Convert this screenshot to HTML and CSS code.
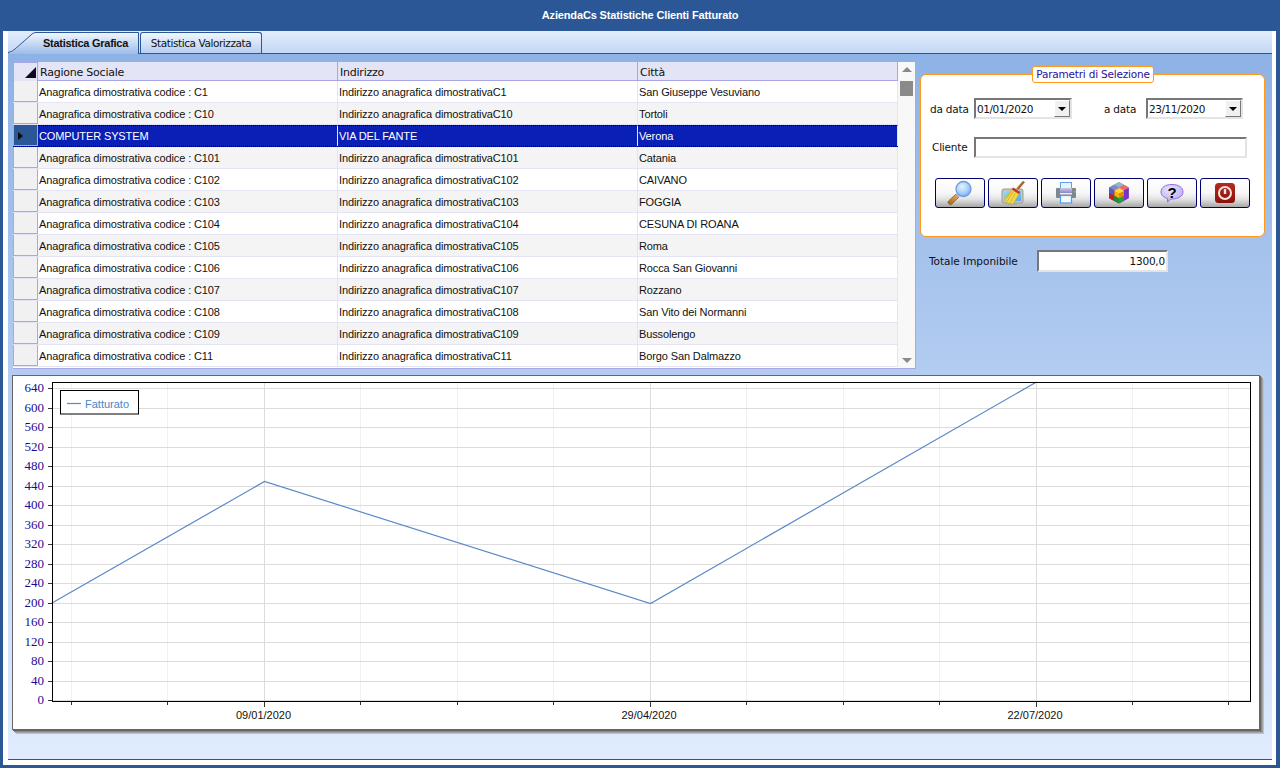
FILE: index.html
```html
<!DOCTYPE html>
<html lang="it">
<head>
<meta charset="utf-8">
<title>AziendaCs Statistiche Clienti Fatturato</title>
<link rel="stylesheet" href="styles.css">
</head>
<body>
<div class="window">
  <header class="titlebar">AziendaCs Statistiche Clienti Fatturato</header>
  <div class="frame">
    <nav class="tabstrip">
      <div class="tab tab-active">
        <svg class="tab-shape" width="131" height="22" viewBox="0 0 131 22"><defs><linearGradient id="tabg" x1="0" y1="0" x2="0" y2="1"><stop offset="0" stop-color="#f2f7fe"/><stop offset="1" stop-color="#9dbcea"/></linearGradient></defs><path d="M0 21.5 Q4 21 7 18 L23 3 Q25 .5 28 .5 L130.5 .5 L130.5 22 L0 22Z" fill="url(#tabg)"/><path d="M0 20.5 Q4 20 7 17 L23 3 Q25 .5 28 .5 L130.5 .5 L130.5 22" fill="none" stroke="#2b5797"/></svg>
        <span class="tab-label">Statistica Grafica</span>
      </div>
      <div class="tab tab-idle">Statistica Valorizzata</div>
    </nav>
    <main class="panel">
      <section class="top">
        <div class="datagrid">
          <div class="table">
            <div class="row head"><div class="rh corner"><span class="corner-mark"></span></div><div class="c">Ragione Sociale</div><div class="c">Indirizzo</div><div class="c">Città</div></div>
            <div class="row"><div class="rh"></div><div class="c">Anagrafica dimostrativa codice : C1</div><div class="c">Indirizzo anagrafica dimostrativaC1</div><div class="c">San Giuseppe Vesuviano</div></div>
            <div class="row"><div class="rh"></div><div class="c">Anagrafica dimostrativa codice : C10</div><div class="c">Indirizzo anagrafica dimostrativaC10</div><div class="c">Tortoli</div></div>
            <div class="row sel"><div class="rh"><span class="arrow"></span></div><div class="c">COMPUTER SYSTEM</div><div class="c">VIA DEL FANTE</div><div class="c">Verona</div></div>
            <div class="row"><div class="rh"></div><div class="c">Anagrafica dimostrativa codice : C101</div><div class="c">Indirizzo anagrafica dimostrativaC101</div><div class="c">Catania</div></div>
            <div class="row"><div class="rh"></div><div class="c">Anagrafica dimostrativa codice : C102</div><div class="c">Indirizzo anagrafica dimostrativaC102</div><div class="c">CAIVANO</div></div>
            <div class="row"><div class="rh"></div><div class="c">Anagrafica dimostrativa codice : C103</div><div class="c">Indirizzo anagrafica dimostrativaC103</div><div class="c">FOGGIA</div></div>
            <div class="row"><div class="rh"></div><div class="c">Anagrafica dimostrativa codice : C104</div><div class="c">Indirizzo anagrafica dimostrativaC104</div><div class="c">CESUNA DI ROANA</div></div>
            <div class="row"><div class="rh"></div><div class="c">Anagrafica dimostrativa codice : C105</div><div class="c">Indirizzo anagrafica dimostrativaC105</div><div class="c">Roma</div></div>
            <div class="row"><div class="rh"></div><div class="c">Anagrafica dimostrativa codice : C106</div><div class="c">Indirizzo anagrafica dimostrativaC106</div><div class="c">Rocca San Giovanni</div></div>
            <div class="row"><div class="rh"></div><div class="c">Anagrafica dimostrativa codice : C107</div><div class="c">Indirizzo anagrafica dimostrativaC107</div><div class="c">Rozzano</div></div>
            <div class="row"><div class="rh"></div><div class="c">Anagrafica dimostrativa codice : C108</div><div class="c">Indirizzo anagrafica dimostrativaC108</div><div class="c">San Vito dei Normanni</div></div>
            <div class="row"><div class="rh"></div><div class="c">Anagrafica dimostrativa codice : C109</div><div class="c">Indirizzo anagrafica dimostrativaC109</div><div class="c">Bussolengo</div></div>
            <div class="row"><div class="rh"></div><div class="c">Anagrafica dimostrativa codice : C11</div><div class="c">Indirizzo anagrafica dimostrativaC11</div><div class="c">Borgo San Dalmazzo</div></div>
          </div>
          <div class="scrollbar">
            <span class="sb-up"></span>
            <span class="sb-thumb"></span>
            <span class="sb-down"></span>
          </div>
        </div>
        <aside class="side">
          <form class="group">
            <div class="legend">Parametri di Selezione</div>
            <div class="field-row">
              <label class="lbl lbl-da">da data</label>
              <div class="input date date-a">01/01/2020<span class="drop"><span class="drop-arrow"></span></span></div>
              <label class="lbl lbl-a">a data</label>
              <div class="input date date-b">23/11/2020<span class="drop"><span class="drop-arrow"></span></span></div>
            </div>
            <div class="field-row row-cliente">
              <label class="lbl lbl-cliente">Cliente</label>
              <div class="input input-cliente"></div>
            </div>
            <div class="buttons">
              <button type="button" class="btn" aria-label="Cerca">
                <svg width="30" height="28" viewBox="0 0 30 28"><defs><radialGradient id="lens" cx=".4" cy=".35" r=".7"><stop offset="0" stop-color="#e6f3ff"/><stop offset=".6" stop-color="#a8d0fb"/><stop offset="1" stop-color="#6ea5ee"/></radialGradient><linearGradient id="hand" x1="1" y1="0" x2="0" y2="1"><stop offset="0" stop-color="#eab35c"/><stop offset="1" stop-color="#a4601c"/></linearGradient></defs><path d="M4.5 25.5 L3 24 Q2.6 23 3.5 22 L11 15 L14 18 L6.5 25.5 Q5.5 26 4.5 25.5Z" fill="url(#hand)" stroke="#8a5a20" stroke-width=".7"/><path d="M11.5 14.5 L14.5 17.5" stroke="#b8b8c8" stroke-width="2.2"/><circle cx="18.5" cy="10" r="7.5" fill="url(#lens)" stroke="#6f9fe0" stroke-width="1.3"/></svg>
              </button>
              <button type="button" class="btn" aria-label="Pulisci">
                <svg width="30" height="28" viewBox="0 0 30 28"><defs><linearGradient id="scr" x1="0" y1="0" x2="1" y2="1"><stop offset="0" stop-color="#9cd6f4"/><stop offset="1" stop-color="#5aa8dc"/></linearGradient></defs><rect x="4" y="10" width="21" height="14" rx="2" fill="#c6c6c2" stroke="#9a9a96"/><rect x="6" y="12" width="17" height="10" fill="url(#scr)"/><path d="M10 24 L10 26 L19 26 L19 24" fill="#a9a9a5"/><path d="M6 21 L14 10.5 L21 14.5 L15 25 Q10 25.5 6 21Z" fill="#f4da4a" stroke="#cfae2c" stroke-width=".6"/><path d="M9 22.5 L15.5 12 M12 24 L17.5 13.5 M7.5 20.5 L13.5 12.5" stroke="#c9a82a" stroke-width=".8"/><path d="M14.5 9.5 L21.5 14" stroke="#c6332b" stroke-width="2.4"/><path d="M19.5 10 L26 2.5" stroke="#a4692c" stroke-width="2.6"/></svg>
              </button>
              <button type="button" class="btn" aria-label="Stampa">
                <svg width="30" height="28" viewBox="0 0 30 28"><defs><linearGradient id="prn" x1="0" y1="0" x2="0" y2="1"><stop offset="0" stop-color="#cbc9ec"/><stop offset="1" stop-color="#8a87bf"/></linearGradient></defs><rect x="9.5" y="3.5" width="11" height="6" fill="#eaf4ff" stroke="#5aa4ee"/><rect x="5" y="9" width="20" height="10" rx="1" fill="#80858f"/><rect x="9" y="9" width="12" height="5" fill="url(#prn)"/><rect x="9" y="14" width="12" height="1.5" fill="#eeeef6"/><rect x="23" y="12" width="1.5" height="1.5" fill="#6fd06f"/><rect x="9.5" y="16.5" width="11" height="7.5" fill="#f4f9ff" stroke="#4f9de9" stroke-width="1.2"/></svg>
              </button>
              <button type="button" class="btn" aria-label="Grafico">
                <svg width="30" height="28" viewBox="0 0 30 28"><g transform="translate(1.5 1.2) scale(.9)"><path d="M15 2 L26 8 L15 14 L4 8Z" fill="#e58378"/><path d="M15 2 L20.5 5 L15 8 L9.5 5Z" fill="#8fb4d8"/><path d="M4 8 L9.5 5 L15 8 L9.5 11Z" fill="#6f90c8"/><path d="M15 8 L20.5 5 L26 8 L20.5 11Z" fill="#e86f62"/><path d="M4 8 L15 14 L15 26 L4 20Z" fill="#c9352b"/><path d="M4 8 L9.5 11 L9.5 17 L4 14Z" fill="#4a5fd0"/><path d="M9.5 17 L15 20 L15 26 L9.5 23Z" fill="#238a3a"/><path d="M4 14 L9.5 17 L9.5 23 L4 20Z" fill="#b5262b"/><path d="M26 8 L15 14 L15 26 L26 20Z" fill="#7a33c8"/><path d="M15 20 L20.5 17 L20.5 23 L15 26Z" fill="#2f9a3f"/><path d="M10 12 L15.5 9 L20.5 12 L20.5 17 L15 20 L10 17Z" fill="#f4b400"/><path d="M15 14.5 L20.5 12 L20.5 17 L15 20Z" fill="#dd8e00"/><path d="M10 12 L15 14.5 L20.5 12 L15.5 9Z" fill="#ffd64a"/></g></svg>
              </button>
              <button type="button" class="btn" aria-label="Aiuto">
                <svg width="30" height="28" viewBox="0 0 30 28"><defs><radialGradient id="bub" cx=".4" cy=".3" r=".8"><stop offset="0" stop-color="#e8e6ff"/><stop offset="1" stop-color="#b0a8f2"/></radialGradient></defs><path d="M15 5.5 C22 5.5 26 8.5 26 13 C26 17.5 21 20 15 20 L14 20 L10.5 23 L10.5 19.5 C6.5 18.5 4 16 4 13 C4 8.5 8 5.5 15 5.5Z" fill="url(#bub)" stroke="#a06ae8" stroke-width="1"/><text x="15" y="18.5" class="qmark" text-anchor="middle">?</text></svg>
              </button>
              <button type="button" class="btn" aria-label="Esci">
                <svg width="30" height="28" viewBox="0 0 30 28"><defs><linearGradient id="pw" x1="0" y1="0" x2="0" y2="1"><stop offset="0" stop-color="#b42a20"/><stop offset="1" stop-color="#8c100d"/></linearGradient></defs><rect x="5" y="4" width="20" height="20" rx="3.5" fill="url(#pw)"/><circle cx="15" cy="14" r="6" fill="none" stroke="#f6e6e2" stroke-width="2"/><path d="M15 10 V15" stroke="#f6e6e2" stroke-width="2.4"/></svg>
              </button>
            </div>
          </form>
          <div class="total">
            <label class="lbl lbl-total">Totale Imponibile</label>
            <div class="input input-total">1300,0</div>
          </div>
        </aside>
      </section>
      <section class="chart">
        <svg class="chart-svg" width="1246" height="353" viewBox="13 376 1246 353">
          <g class="gminor">
            <path d="M71.5 382V702M167.5 382V702M360.5 382V702M457.5 382V702M553.5 382V702M746.5 382V702M843.5 382V702M939.5 382V702M1132.5 382V702M1228.5 382V702"/>
          </g>
          <g class="gmajor">
            <path d="M52 388.5H1251M52 408.5H1251M52 427.5H1251M52 447.5H1251M52 466.5H1251M52 486.5H1251M52 505.5H1251M52 525.5H1251M52 544.5H1251M52 564.5H1251M52 583.5H1251M52 603.5H1251M52 622.5H1251M52 642.5H1251M52 661.5H1251M52 681.5H1251M52 700.5H1251"/>
            <path d="M264.5 382V702M650.5 382V702M1036.5 382V702"/>
          </g>
          <polyline class="series" points="52,603 264.5,481.5 650.5,603.5 1036.5,382"/>
          <g class="ticks">
            <path d="M48 388.5H52M48 408.5H52M48 427.5H52M48 447.5H52M48 466.5H52M48 486.5H52M48 505.5H52M48 525.5H52M48 544.5H52M48 564.5H52M48 583.5H52M48 603.5H52M48 622.5H52M48 642.5H52M48 661.5H52M48 681.5H52M48 700.5H52"/>
            <path d="M71.5 702V705M167.5 702V705M264.5 702V707M360.5 702V705M457.5 702V705M553.5 702V705M650.5 702V707M746.5 702V705M843.5 702V705M939.5 702V705M1036.5 702V707M1132.5 702V705M1228.5 702V705"/>
          </g>
          <rect class="plot" x="52.5" y="382.5" width="1198" height="319"/>
          <rect class="legend-box" x="60.5" y="390.5" width="78" height="23.5"/>
          <path class="series" d="M67 403.5H81"/>
          <text class="legend-text" x="85" y="408">Fatturato</text>
          <g class="ylab">
            <text x="44" y="392">640</text><text x="44" y="412">600</text><text x="44" y="431">560</text><text x="44" y="451">520</text><text x="44" y="470">480</text><text x="44" y="490">440</text><text x="44" y="509">400</text><text x="44" y="529">360</text><text x="44" y="548">320</text><text x="44" y="568">280</text><text x="44" y="587">240</text><text x="44" y="607">200</text><text x="44" y="626">160</text><text x="44" y="646">120</text><text x="44" y="665">80</text><text x="44" y="685">40</text><text x="44" y="704">0</text>
          </g>
          <g class="xlab">
            <text x="263.5" y="719">09/01/2020</text><text x="649" y="719">29/04/2020</text><text x="1035" y="719">22/07/2020</text>
          </g>
        </svg>
      </section>
    </main>
  </div>
</div>
</body>
</html>
```
FILE: styles.css
```css
* { box-sizing: border-box; }
html, body { margin: 0; padding: 0; }
body { width: 1280px; height: 768px; overflow: hidden; font-family: "Liberation Sans", Arial, sans-serif; }
.window { width: 1280px; height: 768px; display: flex; flex-direction: column; background: #2b5797; }
.titlebar { height: 31px; flex: none; display: flex; align-items: center; justify-content: center; color: #fff; font: bold 11px/1 "Liberation Sans", sans-serif; letter-spacing: -.15px; padding-bottom: 1px; }
.frame { flex: 1; margin: 0 4px 3px 3px; padding: 0 4px 5px 5px; background: #fff; display: flex; flex-direction: column; min-height: 0; }
.tabstrip { height: 23px; flex: none; display: flex; align-items: flex-end; padding-top: 2px; background: linear-gradient(#e2eefc, #c3d7f4); border-bottom: 1px solid #2b5797; }
.tab { height: 21px; font: 10.5px/20px "DejaVu Sans", sans-serif; color: #111; }
.tab-active { position: relative; width: 131px; height: 22px; margin-bottom: -1px; font: bold 11px/22px "Liberation Sans", sans-serif; letter-spacing: -.27px; text-align: left; }
.tab-shape { position: absolute; left: 0; top: 0; }
.tab-label { position: relative; display: block; padding-left: 35px; line-height: 22px; }
.tab-idle { width: 122px; height: 21px; margin-left: 1px; text-align: center; letter-spacing: -.42px; border: 1px solid #2b5797; border-bottom: 0; border-radius: 3px 3px 0 0; background: linear-gradient(#f0f6fe, #b7cff1); }
.panel { flex: 1; min-height: 0; display: flex; flex-direction: column; padding: 8px 0 0 4px; background: linear-gradient(#8eb2e6, #e0ecfe); border-bottom: 1px solid #2b5797; }
.top { display: flex; height: 307px; flex: none; margin-left: 1px; }
.datagrid { width: 903px; height: 307px; flex: none; display: flex; background: #fff; border: 1px solid #a9a5e6; border-top: 0; border-left: 0; }
.table { width: 885px; flex: none; overflow: hidden; background: #fff; }
.row { display: grid; grid-template-columns: 25px 300px 300px 260px; height: 22px; font-size: 11px; letter-spacing: -.12px; line-height: 23px; color: #111; background: #fff; border-bottom: 1px solid #e5e4f6; }
.row:nth-child(odd) { background: #f4f4f4; }
.c { padding-left: 1px; white-space: nowrap; overflow: hidden; border-right: 1px solid #e5e4f6; }
.rh { background: #f1f1f1; border: 1px solid #a9a5e6; border-width: 0 1px 1px 1px; position: relative; }
.head { height: 19px; background: #e3e4f6; border-bottom: 1px solid #a9a5e6; font: 11px/21px "DejaVu Sans", sans-serif; letter-spacing: -.23px; }
.head:nth-child(odd) { background: #e3e4f6; }
.head .c { padding-left: 2px; border-right: 1px solid #a9a5e6; }
.head .rh { background: #e3e4f6; border-width: 1px 1px 0 1px; height: 19px; }
.corner-mark { position: absolute; right: 1px; top: 4px; width: 0; height: 0; border-style: solid; border-width: 0 0 11px 11px; border-color: transparent transparent #12091f transparent; }
.row.sel, .row.sel:nth-child(odd) { background: #0a1fb5; color: #fff; border-bottom: 1px dotted #000; }
.sel .c { border-right: 1px solid #dfe4ff; border-top: 1px dotted #000; line-height: 20px; }
.sel .rh { background: #2b5797; }
.arrow { position: absolute; left: 4px; top: 7px; width: 0; height: 0; border-style: solid; border-width: 4px 0 4px 5px; border-color: transparent transparent transparent #0a0a0a; }
.scrollbar { width: 17px; flex: none; display: flex; flex-direction: column; align-items: center; background: #f8f8f8; position: relative; }
.sb-up { margin-top: 5px; width: 0; height: 0; border-style: solid; border-width: 0 5px 5px 5px; border-color: transparent transparent #8a8a8a transparent; }
.sb-thumb { margin-top: 9px; width: 13px; height: 15px; background: #8a8a8a; }
.sb-down { margin-top: auto; margin-bottom: 5px; width: 0; height: 0; border-style: solid; border-width: 5px 5px 0 5px; border-color: #8a8a8a transparent transparent transparent; }
.side { width: 345px; flex: none; margin-left: 4px; padding-top: 12px; display: flex; flex-direction: column; }
.group { position: relative; height: 163px; background: #fff; border: 1px solid #ff9a1c; border-radius: 6px; padding-top: 23px; }
.legend { position: absolute; left: 111px; top: -9px; width: 122px; height: 17px; background: #fff; border: 1px solid #ff9a1c; border-radius: 3px; text-align: center; font: 10.5px/15px "DejaVu Sans", sans-serif; letter-spacing: -.2px; color: #2a1098; }
.field-row { display: flex; align-items: center; height: 21px; }
.row-cliente { margin-top: 18px; }
.lbl { font: 10.5px/1 "DejaVu Sans", sans-serif; color: #111; letter-spacing: -.2px; white-space: nowrap; position: relative; }
.lbl-da { width: 53px; padding-left: 9px; padding-top: 2px; }
.lbl-a { width: 42px; margin-left: 32px; padding-top: 2px; }
.lbl-cliente { width: 53px; padding-left: 11px; }
.input { height: 21px; background: #fff; border: 2px solid; border-color: #777 #e4e4e4 #e4e4e4 #777; }
.date { position: relative; font: 10.5px/19px "DejaVu Sans", sans-serif; letter-spacing: -.45px; color: #111; padding-left: 1px; }
.date-a { width: 98px; }
.date-b { width: 97px; }
.drop { position: absolute; right: 0; top: 0; width: 16px; height: 17px; background: #f0f0f0; border: 1px solid; border-color: #fff #777 #777 #fff; display: flex; align-items: center; justify-content: center; }
.drop-arrow { width: 0; height: 0; border-style: solid; border-width: 4px 4px 0 4px; border-color: #000 transparent transparent transparent; }
.input-cliente { width: 273px; }
.buttons { display: flex; gap: 3px; margin: 20px 0 0 14px; }
.btn { width: 50px; height: 30px; padding: 0; border: 1px solid #00006e; border-radius: 3px; background: linear-gradient(#fff 0, #f7f7f7 50%, #e2e2e2 72%, #a8a8a8 100%); display: flex; align-items: center; justify-content: center; overflow: hidden; }
.qmark { font: bold 15px "Liberation Sans", sans-serif; fill: #000; }
.total { display: flex; align-items: center; margin-top: 13px; height: 22px; }
.lbl-total { width: 117px; padding-left: 9px; letter-spacing: -.03px; }
.input-total { width: 131px; height: 22px; text-align: right; padding-right: 1px; font: 10.5px/18px "DejaVu Sans", sans-serif; letter-spacing: -.2px; color: #111; }
.chart { margin-top: 6px; width: 1248px; height: 355px; flex: none; background: #fff; border: 1px solid #666; box-shadow: 1px 1px 0 #666, 2px 2px 0 #888, 3px 3px 0 #a5a5a5, 4px 4px 0 #c0c0c0; }
.chart-svg { display: block; }
.gminor path { stroke: #f0f0f0; fill: none; }
.gmajor path { stroke: #dcdcdc; fill: none; }
.series { stroke: #5b88c8; fill: none; stroke-width: 1.2; }
.ticks path { stroke: #333; fill: none; }
.plot { fill: none; stroke: #000; stroke-width: 1; }
.legend-box { fill: #fff; stroke: #000; stroke-width: 1; }
.legend-text { font: 11px "Liberation Sans", sans-serif; fill: #4a86c8; }
.ylab text { font: 13px "Liberation Serif", serif; fill: #1e0a9a; text-anchor: end; }
.xlab text { font: 11px "Liberation Sans", sans-serif; fill: #111; text-anchor: middle; }
```
